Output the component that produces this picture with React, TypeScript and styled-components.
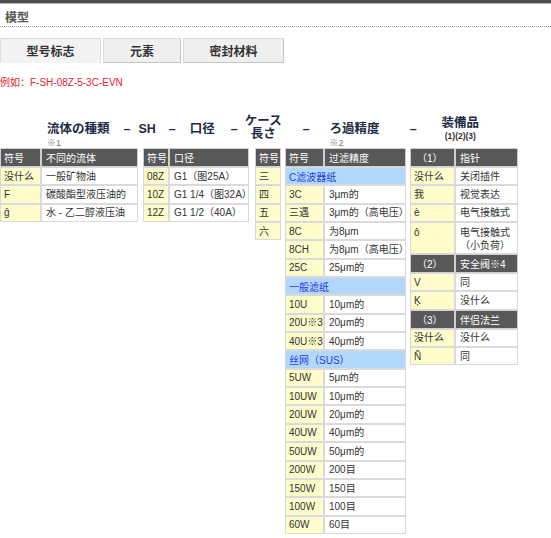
import React from "react";
import styled, { createGlobalStyle } from "styled-components";

const Global = createGlobalStyle`
  html, body { margin: 0; padding: 0; background: #fff; }
  body { font-family: "Liberation Sans", "Noto Sans CJK SC", sans-serif; color: #333; }
`;

const Page = styled.div`
  width: 551px;
  min-height: 538px;
  display: flex;
  flex-direction: column;
`;

const TopBar = styled.div`
  height: 3px;
  background: #4d4d4d;
  border-bottom: 1px solid #b5b5b5;
`;

const Title = styled.div`
  font-size: 12px;
  font-weight: bold;
  color: #555;
  padding: 7px 0 0 5px;
  height: 14px;
  line-height: 14px;
  border-bottom: 1px dotted #9a9a9a;
  padding-bottom: 1px;
`;

const Tabs = styled.div`
  display: flex;
  margin-top: 11px;
  gap: 2px;
`;

const Tab = styled.div<{ $w: number; $active?: boolean }>`
  width: ${(p) => p.$w}px;
  height: 25px;
  box-sizing: border-box;
  display: flex;
  align-items: center;
  justify-content: center;
  font-size: 12px;
  font-weight: bold;
  color: #333;
  background: ${(p) => (p.$active ? "#f3f3f3" : "#efefef")};
  border: 1px solid #dcdcdc;
  border-right-color: ${(p) => (p.$active ? "#dcdcdc" : "#c4c4c4")};
  border-bottom-color: ${(p) => (p.$active ? "#f3f3f3" : "#c4c4c4")};
`;

const Example = styled.div`
  margin: 14px 0 0 0;
  font-size: 10px;
  line-height: 12px;
  color: #e8232a;
`;

const LabelRow = styled.div`
  display: flex;
  align-items: flex-start;
  height: 33px;
  margin-top: 26px;
`;

const Label = styled.div<{ $left: number; $top: number; $center?: boolean }>`
  margin-left: ${(p) => p.$left}px;
  margin-top: ${(p) => p.$top}px;
  display: flex;
  flex-direction: column;
  align-items: ${(p) => (p.$center ? "center" : "flex-start")};
  font-size: 12.5px;
  font-weight: bold;
  color: #1f2a44;
  line-height: 13px;
  white-space: nowrap;
`;

const Note = styled.span<{ $gap: number }>`
  font-size: 9px;
  font-weight: normal;
  color: #777;
  line-height: 9px;
  margin-top: ${(p) => p.$gap}px;
`;

const SubNote = styled.span`
  font-size: 8.5px;
  font-weight: bold;
  color: #333;
  line-height: 9px;
  margin-top: 2px;
`;

const Tables = styled.div`
  display: flex;
  align-items: flex-start;
`;

const Table = styled.table<{ $w: number; $ml: number }>`
  width: ${(p) => p.$w}px;
  margin-left: ${(p) => p.$ml}px;
  border-collapse: separate;
  border-spacing: 0;
  table-layout: fixed;
  font-size: 10px;
  color: #333;
`;

const Th = styled.th<{ $w?: number; $pl?: number }>`
  width: ${(p) => (p.$w ? `${p.$w}px` : "auto")};
  height: 17px;
  padding: 0 0 0 ${(p) => p.$pl ?? 3}px;
  background: #585858;
  color: #fff;
  font-weight: normal;
  text-align: left;
  border: 1px solid #d0d0d0;
  white-space: nowrap;
  box-sizing: content-box;
`;

const Td = styled.td<{ $key?: boolean; $pl?: number; $tall?: boolean }>`
  height: ${(p) => (p.$tall ? "27px" : "16.35px")};
  padding: 0 0 0 ${(p) => p.$pl ?? 3}px;
  background: ${(p) => (p.$key ? "#fffccc" : "#fff")};
  border: 1px solid #dadada;
  white-space: nowrap;
  line-height: 13px;
  vertical-align: ${(p) => (p.$tall ? "top" : "middle")};
  padding-top: ${(p) => (p.$tall ? "3px" : "0")};
  box-sizing: content-box;
`;

const Band = styled.td`
  height: 16.35px;
  padding: 0 0 0 3px;
  background: #b3d6fb;
  color: #1f3fe0;
  border: 1px solid #dadada;
  white-space: nowrap;
`;

const Line = styled.span`
  display: block;
`;

type Row = [string, string];

const fluids: Row[] = [
  ["没什么", "一般矿物油"],
  ["F", "碳酸酯型液压油的"],
  ["ĝ", "水 - 乙二醇液压油"],
];

const ports: Row[] = [
  ["08Z", "G1（图25A）"],
  ["10Z", "G1 1/4（图32A）"],
  ["12Z", "G1 1/2（40A）"],
];

const lengths = ["三", "四", "五", "六"];

type Group = { band: string; rows: Row[] };
const filters: Group[] = [
  {
    band: "C滤波器纸",
    rows: [
      ["3C", "3μm的"],
      ["三遇", "3μm的（高电压）"],
      ["8C", "为8μm"],
      ["8CH", "为8μm（高电压）"],
      ["25C", "25μm的"],
    ],
  },
  {
    band: "一般滤纸",
    rows: [
      ["10U", "10μm的"],
      ["20U※3", "20μm的"],
      ["40U※3", "40μm的"],
    ],
  },
  {
    band: "丝网（SUS）",
    rows: [
      ["5UW", "5μm的"],
      ["10UW", "10μm的"],
      ["20UW", "20μm的"],
      ["40UW", "40μm的"],
      ["50UW", "50μm的"],
      ["200W", "200目"],
      ["150W", "150目"],
      ["100W", "100目"],
      ["60W", "60目"],
    ],
  },
];

type Equip = { head: [string, string]; rows: Row[] };
const equipment: Equip[] = [
  {
    head: ["（1）", "指针"],
    rows: [
      ["没什么", "关闭插件"],
      ["我", "视觉表达"],
      ["è", "电气接触式"],
      ["ô", "电气接触式\n（小负荷）"],
    ],
  },
  {
    head: ["（2）", "安全阀※4"],
    rows: [
      ["V", "同"],
      ["Ķ", "没什么"],
    ],
  },
  {
    head: ["（3）", "伴侣法兰"],
    rows: [
      ["没什么", "没什么"],
      ["Ñ", "同"],
    ],
  },
];

function TwoColTable({
  w,
  ml,
  c1,
  heads,
  rows,
  pl2,
}: {
  w: number;
  ml: number;
  c1: number;
  heads: [string, string];
  rows: Row[];
  pl2: number;
}) {
  return (
    <Table $w={w} $ml={ml}>
      <thead>
        <tr>
          <Th $w={c1 - 5}>{heads[0]}</Th>
          <Th $pl={pl2}>{heads[1]}</Th>
        </tr>
      </thead>
      <tbody>
        {rows.map((r) => (
          <tr key={r[0]}>
            <Td $key>{r[0]}</Td>
            <Td $pl={pl2}>{r[1]}</Td>
          </tr>
        ))}
      </tbody>
    </Table>
  );
}

export default function App() {
  return (
    <Page>
      <Global />
      <TopBar />
      <Title>模型</Title>
      <Tabs>
        <Tab $w={101} $active>型号标志</Tab>
        <Tab $w={78}>元素</Tab>
        <Tab $w={101}>密封材料</Tab>
      </Tabs>
      <Example>例如：F-SH-08Z-5-3C-EVN</Example>
      <LabelRow>
        <Label $left={47} $top={8}>
          流体の種類
          <Note $gap={3}>※1</Note>
        </Label>
        <Label $left={14} $top={8}>–</Label>
        <Label $left={8} $top={8}>SH</Label>
        <Label $left={13} $top={8}>–</Label>
        <Label $left={14} $top={8}>口径</Label>
        <Label $left={16} $top={8}>–</Label>
        <Label $left={7} $top={0} $center>
          ケース
          <span>長さ</span>
        </Label>
        <Label $left={21} $top={8}>–</Label>
        <Label $left={20} $top={8}>
          ろ過精度
          <Note $gap={3}>※2</Note>
        </Label>
        <Label $left={30} $top={8}>–</Label>
        <Label $left={25} $top={2} $center>
          装備品
          <SubNote>(1)(2)(3)</SubNote>
        </Label>
      </LabelRow>
      <Tables>
        <TwoColTable w={138} ml={0} c1={41} heads={["符号", "不同的流体"]} rows={fluids} pl2={4} />
        <TwoColTable w={106} ml={5} c1={26} heads={["符号", "口径"]} rows={ports} pl2={4} />
        <Table $w={26} $ml={6}>
          <thead>
            <tr>
              <Th>符号</Th>
            </tr>
          </thead>
          <tbody>
            {lengths.map((l) => (
              <tr key={l}>
                <Td $key>{l}</Td>
              </tr>
            ))}
          </tbody>
        </Table>
        <Table $w={121} $ml={4}>
          <thead>
            <tr>
              <Th $w={34}>符号</Th>
              <Th $pl={4}>过滤精度</Th>
            </tr>
          </thead>
          <tbody>
            {filters.map((g) => (
              <React.Fragment key={g.band}>
                <tr>
                  <Band colSpan={2}>{g.band}</Band>
                </tr>
                {g.rows.map((r) => (
                  <tr key={r[0]}>
                    <Td $key>{r[0]}</Td>
                    <Td $pl={4}>{r[1]}</Td>
                  </tr>
                ))}
              </React.Fragment>
            ))}
          </tbody>
        </Table>
        <Table $w={108} $ml={4}>
          <thead>
            <tr>
              <Th $w={37} $pl={6}>{equipment[0].head[0]}</Th>
              <Th $pl={4}>{equipment[0].head[1]}</Th>
            </tr>
          </thead>
          <tbody>
            {equipment.map((g, gi) => (
              <React.Fragment key={g.head[0]}>
                {gi > 0 && (
                  <tr>
                    <Th $pl={6}>{g.head[0]}</Th>
                    <Th $pl={4}>{g.head[1]}</Th>
                  </tr>
                )}
                {g.rows.map((r) => {
                  const lines = r[1].split("\n");
                  const tall = lines.length > 1;
                  return (
                    <tr key={r[0] + r[1]}>
                      <Td $key $tall={tall}>{r[0]}</Td>
                      <Td $pl={4} $tall={tall}>
                        {lines.map((t) => (
                          <Line key={t}>{t}</Line>
                        ))}
                      </Td>
                    </tr>
                  );
                })}
              </React.Fragment>
            ))}
          </tbody>
        </Table>
      </Tables>
    </Page>
  );
}
